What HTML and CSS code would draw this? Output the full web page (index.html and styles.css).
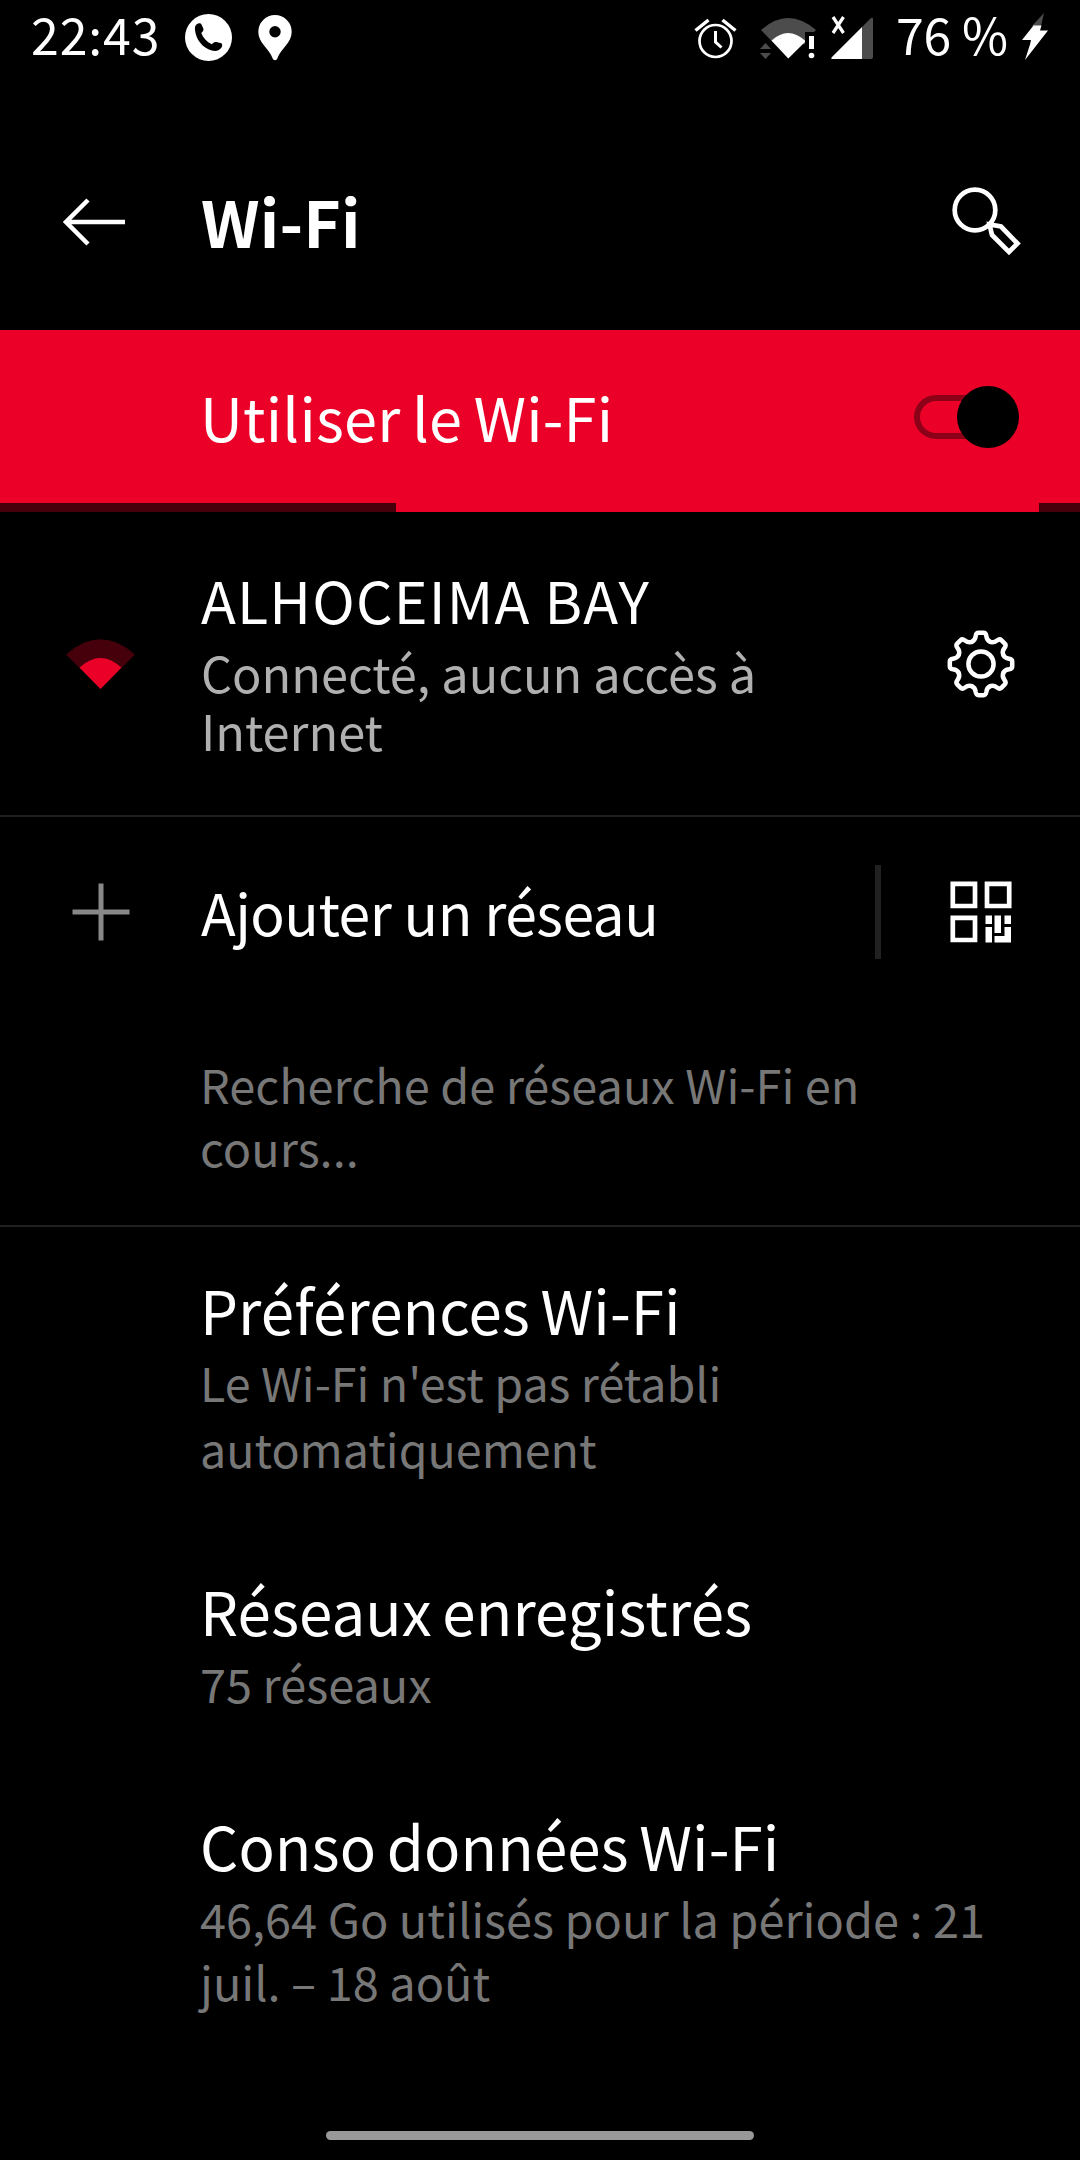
FILE: index.html
```html
<!DOCTYPE html>
<html lang="fr">
<head>
<meta charset="utf-8">
<title>Wi-Fi</title>
<link rel="stylesheet" href="styles.css">
</head>
<body>
<header class="status">
  <span class="time">22:43</span>
  <svg class="s-phone" width="47" height="47" viewBox="0 0 48 48"><circle cx="24" cy="24" r="24" fill="#fff"/><path d="M12 10.500c2-1.500 4-1.200 5 .5l1.800 4c.4 1.800-.6 3-2.200 4.300 2 5 5.500 9 10.800 11.500 2-2 3.800-2.500 5.500-2l4.300 1c1 1 1 2.500.4 4-2.300 3.700-6 4.700-10.300 3.500C18 34.500 11 26 10.200 16c-.2-2.700.3-4.500 1.800-5.500z" fill="#000"/></svg>
  <svg class="s-pin" width="34" height="46" viewBox="0 0 34 46"><path fill="#fff" fill-rule="evenodd" d="M17 0A16.700 16.700 0 0 0 .3 16.700C.3 28 11 33 14.700 43.500c.8 2.200 3.800 2.200 4.600 0C23 33 33.700 28 33.700 16.700A16.700 16.700 0 0 0 17 0zm0 11a5.700 5.700 0 1 1 0 11.400A5.700 5.700 0 0 1 17 11z"/></svg>
  <svg class="s-signals" width="184" height="50" viewBox="690 12 184 50">
    <g fill="none" stroke="#fff" stroke-width="2.700"><circle cx="715.500" cy="41" r="16"/><path d="M715.500 31v11l6 5.500" stroke-width="3"/><path d="M695.500 30.500l13-10.500M735.500 30.500l-13-10.500" stroke-width="3.500"/></g>
    <path fill="#4c4c4c" d="M761 30q27-24 55 0l-2 2h-9v12h-3l-14 14z"/>
    <path fill="#fff" d="M771.500 40.500q16.500-15 33.500 0v1.500l-16.700 16.500z"/>
    <path fill="#4c4c4c" d="M760 49l5.500-6 5.500 6zM760 53h11l-5.500 6z"/>
    <path fill="#fff" d="M809 36h5v13h-5z"/><circle cx="811.500" cy="55.500" r="2.800" fill="#fff"/>
    <path fill="#4c4c4c" d="M862 27l9-9q2-1 2 1v38q0 2-2 2h-9z"/>
    <path fill="#fff" d="M862 27v32h-29q-3 0-1-2z"/>
    <path d="M833 17l10.500 16M843.500 17l-10.500 16" stroke="#fff" stroke-width="3.200"/>
  </svg>
  <span class="battery">76 %</span>
  <svg class="s-bolt" width="28" height="48" viewBox="0 0 28 48"><path fill="#4c4c4c" d="M23 0l-3 13h-9z"/><path fill="#fff" d="M12.500 12.500h8l-1.500 5h8L4 47l5-15.500 1-4.500H1z"/></svg>
</header>
<nav class="appbar">
  <svg class="back" width="64" height="50" viewBox="0 0 64 50" fill="none" stroke="#fff" stroke-width="4.500"><path d="M25 3L3 25l22 22M3 25h59"/></svg>
  <h1>Wi-Fi</h1>
  <svg class="search" width="70" height="70" viewBox="0 0 70 70" fill="none" stroke="#fff" stroke-width="4.700"><circle cx="23" cy="23" r="20.300"/><path d="M37.500 37.500l2.500 10.500 17 17 8.500-8.500-16.500-17z"/></svg>
</nav>
<section class="master">
  <span class="label">Utiliser le Wi-Fi</span>
  <span class="switch"><i class="track"></i><i class="knob"></i></span>
</section>
<div class="progress"><i></i></div>
<main>
  <section class="row network">
    <div class="lead"><svg width="70" height="50" viewBox="0 0 70 50"><path fill="#46000c" d="M0 15.500Q34.500-15 69 15.500L34.500 50z"/><path fill="#eb0028" d="M13.500 28.500Q34.500 9.500 55.500 28.500L34.500 50z"/></svg></div>
    <div class="text"><p class="title">ALHOCEIMA BAY</p><p class="sub">Connecté, aucun accès à<br>Internet</p></div>
    <div class="action"><svg width="68" height="68" viewBox="-34 -34 68 68" fill="none" stroke="#fff" stroke-width="4.500" stroke-linecap="round">
      <defs><path id="tooth" d="M-9.200-22.200C-6.400-23.300-5.700-25-5.300-28Q-4.800-31.200-2.500-31.200H2.500Q4.800-31.200 5.300-28C5.700-25 6.400-23.300 9.200-22.200"/></defs>
      <circle r="12.600"/>
      <use href="#tooth"/><use href="#tooth" transform="rotate(45)"/><use href="#tooth" transform="rotate(90)"/><use href="#tooth" transform="rotate(135)"/><use href="#tooth" transform="rotate(180)"/><use href="#tooth" transform="rotate(225)"/><use href="#tooth" transform="rotate(270)"/><use href="#tooth" transform="rotate(315)"/>
    </svg></div>
  </section>
  <section class="row add">
    <div class="lead"><svg width="58" height="58" viewBox="0 0 58 58" stroke="#888" stroke-width="5"><path d="M29 .5v57M.5 29h57"/></svg></div>
    <p class="title">Ajouter un réseau</p>
    <i class="sep"></i>
    <div class="action"><svg width="62" height="62" viewBox="0 0 62 62"><path fill="none" stroke="#fff" stroke-width="4.700" d="M2.800 2.800H25V25H2.800zM37 2.800H59.200V25H37zM2.800 36.800H25V59H2.800z"/><path fill="#fff" d="M35.500 34.500H42V43h-6.500zM35.500 46H42v15.500h-6.500zM44.500 34.500H51V52h-6.500zM54.500 34.500H61V43h-6.500zM54.500 46H61v15.500H44.500V55h10z"/></svg></div>
  </section>
  <p class="sub scan">Recherche de réseaux Wi-Fi en<br>cours...</p>
  <section class="prefs">
    <div class="pref first"><p class="title">Préférences Wi-Fi</p><p class="sub">Le Wi-Fi n'est pas rétabli<br>automatiquement</p></div>
    <div class="pref"><p class="title">Réseaux enregistrés</p><p class="sub">75 réseaux</p></div>
    <div class="pref"><p class="title">Conso données Wi-Fi</p><p class="sub">46,64 Go utilisés pour la période : 21<br>juil. – 18 août</p></div>
  </section>
</main>
<footer class="gesture"><i></i></footer>
</body>
</html>
```
FILE: styles.css
```css
* { box-sizing: border-box; margin: 0; padding: 0; }
body {
  width: 1080px;
  height: 2160px;
  display: flex;
  flex-direction: column;
  overflow: hidden;
  background: #000;
  color: #fff;
  font-family: "Noto Sans CJK JP", "Noto Sans", sans-serif;
}
svg { display: block; flex: none; }
i { display: block; }
.title { font-size: 60px; line-height: 70px; white-space: nowrap; }
.sub { font-size: 46.900px; line-height: 63px; color: #777; white-space: nowrap; }

/* status bar */
.status {
  height: 80px;
  padding: 0 31px;
  display: flex;
  align-items: flex-start;
  font-size: 50px;
  line-height: 66px;
}
.time { width: 154px; letter-spacing: .9px; }
.s-phone { margin-top: 14px; }
.s-pin { margin: 15px 0 0 26px; }
.s-signals { margin: 12px 22px 0 auto; }
.battery { width: 125px; letter-spacing: -.2px; white-space: nowrap; }
.s-bolt { margin-top: 13px; }

/* title bar */
.appbar {
  height: 250px;
  padding: 33px 58px 0 63px;
  display: flex;
  align-items: center;
}
.back { margin-right: 74px; }
h1 { margin-top: -4px; font-weight: 700; font-size: 64px; line-height: 80px; letter-spacing: .2px; }
.search { margin-left: auto; }

/* master switch */
.master {
  height: 173px;
  padding: 0 61px 0 200px;
  display: flex;
  align-items: center;
  justify-content: space-between;
  background: #eb0028;
}
.label { margin-top: -2px; font-size: 59.500px; line-height: 70px; word-spacing: -2px; letter-spacing: .2px; }
.switch { display: flex; align-items: center; }
.track { width: 77px; height: 44px; border: 6px solid #8c0018; border-radius: 22px; }
.knob { width: 62px; height: 62px; margin-left: -34px; border-radius: 50%; background: #000; }
.progress { height: 9px; padding: 0 41px 0 396px; background: #46000c; }
.progress i { height: 9px; background: #eb0028; }

/* network rows */
.row { display: flex; align-items: center; }
.lead { width: 201px; flex: none; display: flex; justify-content: center; }
.action { width: 199px; margin-left: auto; display: flex; justify-content: center; }
.network { height: 305px; border-bottom: 2px solid #212121; }
.network .text { margin-top: -3px; }
.network .title { font-size: 57.300px; letter-spacing: 1.200px; margin-bottom: 8px; }
.network .sub { font-size: 48.700px; line-height: 58px; color: #b0b0b0; }
.add { height: 190px; }
.add .title { margin-top: -2px; font-size: 57px; letter-spacing: -.5px; }
.sep { width: 6px; height: 94px; margin-left: auto; background: #212121; }
.add .action { margin-left: 0; }
.scan { height: 220px; padding: 46px 0 0 200px; border-bottom: 2px solid #212121; }

/* preferences */
.prefs { padding: 47px 0 0 200px; display: flex; flex-direction: column; gap: 95px; }
.pref .title { word-spacing: -3px; letter-spacing: .1px; }
.pref .sub { margin-top: 7px; }
.first .sub { margin-top: 5px; line-height: 65.500px; font-size: 46.600px; }

.gesture { margin-top: auto; padding-bottom: 20px; display: flex; justify-content: center; }
.gesture i { width: 428px; height: 9px; border-radius: 5px; background: #999; }
```
